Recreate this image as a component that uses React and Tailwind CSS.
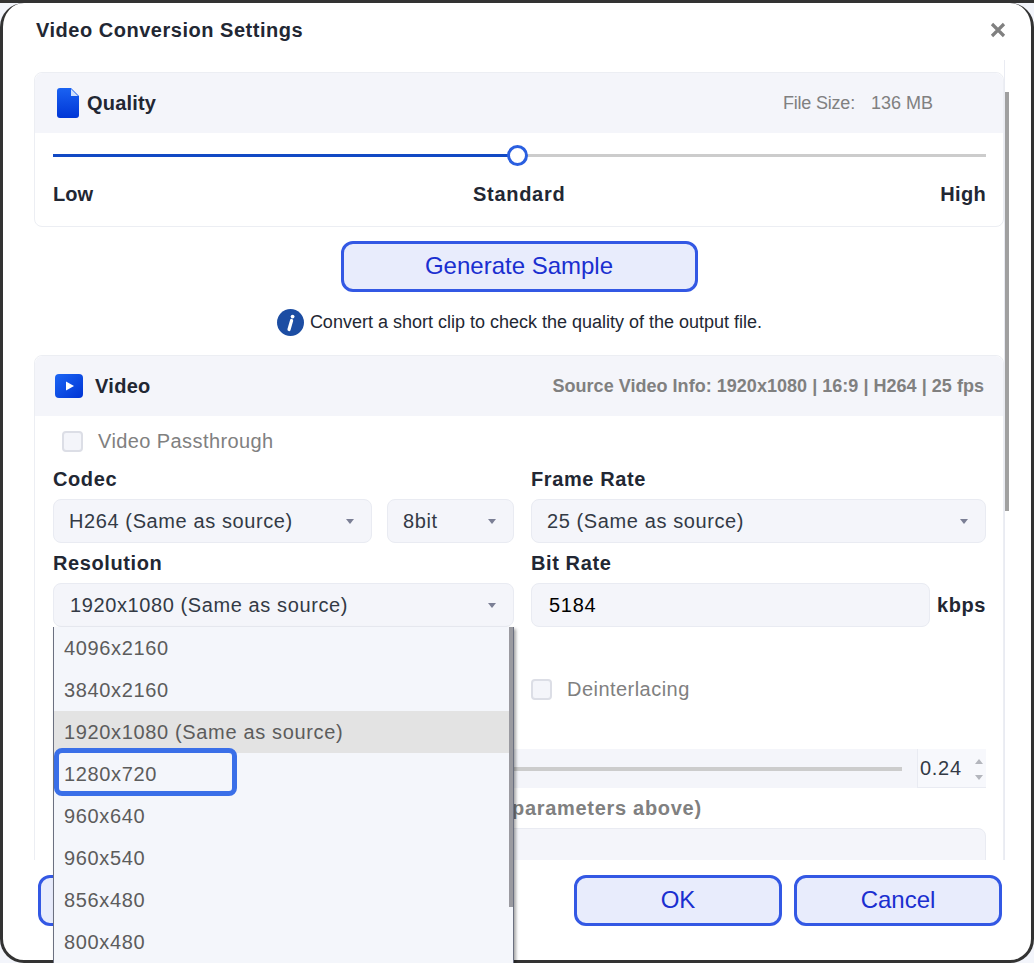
import React from "react";

const Caret = () => (
    <svg width="8" height="5" viewBox="0 0 8 5" className="shrink-0">
        <path d="M0 0H8L4 5Z" fill="#7b7f95" />
    </svg>
);

const Select = ({ label, className = "" }) => (
    <div className={`h-11 flex items-center justify-between pl-[15px] pr-[17px] rounded-lg border border-[#e9ebf2] bg-[#f4f5fa] text-[20px] tracking-[0.6px] text-[#333a45] ${className}`}>
        <span>{label}</span>
        <Caret />
    </div>
);

const FieldLabel = ({ children }) => (
    <div className="h-10 flex items-center text-[20px] font-bold tracking-[0.6px] text-[#222733]">{children}</div>
);

const Checkbox = () => (
    <span className="block w-[21px] h-[21px] rounded-[4px] border-2 border-[#dcdee6] bg-[#f4f5fa] shrink-0" />
);

const ActionButton = ({ children, className = "" }) => (
    <button className={`h-[51px] pb-[2px] rounded-xl border-[3px] border-[#3358e4] bg-[#e8ecfc] text-[#1a2fd0] text-[24px] ${className}`}>
        {children}
    </button>
);

const QualityIcon = () => (
    <svg width="22" height="30" viewBox="0 0 22 30">
        <defs>
            <linearGradient id="quality-blue" x1="0%" y1="0%" x2="0%" y2="100%">
                <stop offset="0%" stopColor="#1a62f2" />
                <stop offset="100%" stopColor="#0036d6" />
            </linearGradient>
        </defs>
        <path d="M3 0H14L22 8V27A3 3 0 0 1 19 30H3A3 3 0 0 1 0 27V3A3 3 0 0 1 3 0Z" fill="url(#quality-blue)" />
        <path d="M14 1L21 8H14Z" fill="#cfe0fb" />
    </svg>
);

const VideoIcon = () => (
    <svg width="28" height="24" viewBox="0 0 28 24">
        <defs>
            <linearGradient id="video-blue" x1="0%" y1="0%" x2="100%" y2="100%">
                <stop offset="0%" stopColor="#1c66f4" />
                <stop offset="100%" stopColor="#0034d4" />
            </linearGradient>
        </defs>
        <rect width="28" height="24" rx="4" fill="url(#video-blue)" />
        <path d="M11 7.5L19 12L11 16.5Z" fill="#fff" />
    </svg>
);

const InfoIcon = () => (
    <svg width="27" height="27" viewBox="0 0 27 27" className="shrink-0">
        <circle cx="13.5" cy="13.5" r="13.5" fill="#1c4da3" />
        <circle cx="15.6" cy="7.6" r="1.9" fill="#fff" />
        <path d="M14.6 11.5L12 20.5" stroke="#fff" strokeWidth="3.2" strokeLinecap="round" />
    </svg>
);

const RESOLUTIONS = ["4096x2160", "3840x2160", "1920x1080 (Same as source)", "1280x720", "960x640", "960x540", "856x480", "800x480"];

const ResolutionMenu = () => (
    <div className="absolute left-[53px] top-[627px] w-[461px] h-[336px] overflow-hidden border-l border-r border-[#6b7080] bg-[#f4f6fb] shadow-[2px_2px_3px_rgba(0,0,0,0.35)] text-[20px] tracking-[0.65px] text-[#5c5c5c]">
        {RESOLUTIONS.map((r, i) => (
            <div key={r} className={`relative h-[42px] flex items-center pl-[10px] ${i === 2 ? "bg-[#e3e3e3]" : ""}`}>
                {r}
                {i === 3 && <span className="absolute left-0 -top-[5px] w-[183px] h-[48px] rounded-lg border-[5px] border-[#3a6fe8]" />}
            </div>
        ))}
        <div className="absolute right-0 top-0 w-1 h-[280px] bg-[#9a9aa0]" />
    </div>
);

export default function App() {
    return (
        <div className="relative w-[1034px] h-[963px] overflow-hidden bg-[#f3f5fb] font-['Liberation_Sans',Arial,sans-serif]">
            <div className="h-[3px] bg-[#333333]" />
            <div className="h-[960px] flex flex-col rounded-t-[24px] rounded-b-[24px] border-x-[3px] border-b-[3px] border-[#333333] bg-white">
                {/* Title */}
                <div className="h-[57px] shrink-0 flex items-center justify-between pl-[33px] pr-[25px] pb-[3px]">
                    <h1 className="text-[20px] font-bold tracking-[0.52px] text-[#222733]">Video Conversion Settings</h1>
                    <svg width="16" height="16" viewBox="0 0 16 16">
                        <path d="M2 2L14 14M14 2L2 14" stroke="#808080" strokeWidth="3.2" />
                    </svg>
                </div>

                {/* Scrolling settings */}
                <div className="flex-1 min-h-0 overflow-hidden ml-[31px] mr-[26px] pt-3 border-r border-[#e9ebf2]">
                    {/* Quality panel */}
                    <section className="h-[155px] rounded-lg border border-[#eceef3]">
                        <div className="h-[60px] flex items-center justify-between pl-[22px] pr-[70px] bg-[#f4f5fa] rounded-t-lg">
                            <div className="flex items-center gap-2 text-[20px] font-bold tracking-[0.2px] text-[#222733]">
                                <QualityIcon />
                                Quality
                            </div>
                            <div className="flex gap-[16px] text-[18px] text-[#808080]">
                                <span className="tracking-[-0.2px]">File Size:</span>
                                <span>136 MB</span>
                            </div>
                        </div>
                        <div className="pl-[18px] pr-[17px] pt-[21px]">
                            <div className="relative h-[3px] bg-[#cccccc]">
                                <div className="h-full w-[465px] bg-[#1149c4]" />
                                <span className="absolute left-[454px] -top-[9px] w-[21px] h-[21px] rounded-full border-[3px] border-[#2a5fe0] bg-white" />
                            </div>
                            <div className="flex justify-between items-center mt-[22px] text-[20px] font-bold text-[#222733]">
                                <span>Low</span>
                                <span className="ml-[5px] tracking-[0.7px]">Standard</span>
                                <span className="tracking-[0.3px]">High</span>
                            </div>
                        </div>
                    </section>

                    {/* Sample */}
                    <div className="flex justify-center mt-[14px]">
                        <ActionButton className="w-[357px]">Generate Sample</ActionButton>
                    </div>
                    <div className="flex justify-center items-center gap-[6px] h-[27px] mt-[17px] pl-[1px] text-[18px] text-[#222733]">
                        <InfoIcon />
                        Convert a short clip to check the quality of the output file.
                    </div>

                    {/* Video panel */}
                    <section className="mt-[19px] rounded-t-lg border border-[#eceef3] h-[600px]">
                        <div className="h-[60px] flex items-center justify-between pl-[20px] pr-[19px] bg-[#f4f5fa] rounded-t-lg">
                            <div className="flex items-center gap-3 text-[20px] font-bold tracking-[0.3px] text-[#222733]">
                                <VideoIcon />
                                Video
                            </div>
                            <span className="text-[18px] font-bold tracking-[0.03px] text-[#808080]">Source Video Info: 1920x1080 | 16:9 | H264 | 25 fps</span>
                        </div>
                        <div className="pl-[18px] pr-[17px]">
                            <div className="h-[43px] pt-[7px] pl-[9px] flex items-center gap-[15px] text-[20px] tracking-[0.41px] text-[#808080]">
                                <Checkbox />
                                Video Passthrough
                            </div>
                            <div className="grid grid-cols-[461px_455px] gap-x-[17px]">
                                <div>
                                    <FieldLabel>Codec</FieldLabel>
                                    <div className="flex gap-[15px]">
                                        <Select label="H264 (Same as source)" className="w-[319px]" />
                                        <Select label="8bit" className="w-[127px]" />
                                    </div>
                                    <FieldLabel>Resolution</FieldLabel>
                                    <Select label="1920x1080 (Same as source)" className="border-[#4a6ea8] pl-[16px]" />
                                </div>
                                <div>
                                    <FieldLabel>Frame Rate</FieldLabel>
                                    <Select label="25 (Same as source)" />
                                    <FieldLabel>Bit Rate</FieldLabel>
                                    <div className="flex items-center justify-between">
                                        <div className="w-[399px] h-11 flex items-center pl-[17px] rounded-lg border border-[#e9ebf2] bg-[#f4f5fa] text-[20px] tracking-[0.75px] text-black">5184</div>
                                        <span className="text-[20px] font-bold tracking-[0.6px] text-[#222733]">kbps</span>
                                    </div>
                                    <div className="flex items-center gap-[15px] mt-[47px] text-[20px] tracking-[0.46px] text-[#808080]">
                                        <Checkbox />
                                        Deinterlacing
                                    </div>
                                </div>
                            </div>
                            <div className="mt-[45px] h-[39px] flex items-center pl-[300px] gap-[15px] bg-[#f4f5fa]">
                                <div className="flex-1 h-1 bg-[#cccccc]" />
                                <div className="relative w-[69px] h-full flex items-center pl-[2px] bg-[#f7f8fc] border-l border-b border-[#e9ebf2] text-[20px] tracking-[0.7px] text-[#333a45]">
                                    0.24
                                    <svg width="8" height="21" viewBox="0 0 8 21" className="absolute right-[3px] top-[10px]">
                                        <path d="M0 5L4 0L8 5Z M0 16L8 16L4 21Z" fill="#b4b6bd" />
                                    </svg>
                                </div>
                            </div>
                            <div className="h-10 flex items-center pl-[459px] text-[20px] font-bold tracking-[0.7px] text-[#808080]">parameters above)</div>
                            <div className="h-[100px] rounded-lg border border-[#e9ebf2] bg-[#f4f5fa]" />
                        </div>
                    </section>
                </div>

                {/* Footer */}
                <div className="h-[100px] shrink-0 flex items-start justify-between pt-[15px] pl-[35px] pr-[29px]">
                    <ActionButton className="w-[208px]" />
                    <div className="flex gap-3">
                        <ActionButton className="w-[208px]">OK</ActionButton>
                        <ActionButton className="w-[208px]">Cancel</ActionButton>
                    </div>
                </div>
            </div>

            {/* Scrollbar */}
            <div className="absolute left-[1005px] top-[92px] w-1 h-[419px] bg-[#a0a0a0]" />
            <ResolutionMenu />
        </div>
    );
}
